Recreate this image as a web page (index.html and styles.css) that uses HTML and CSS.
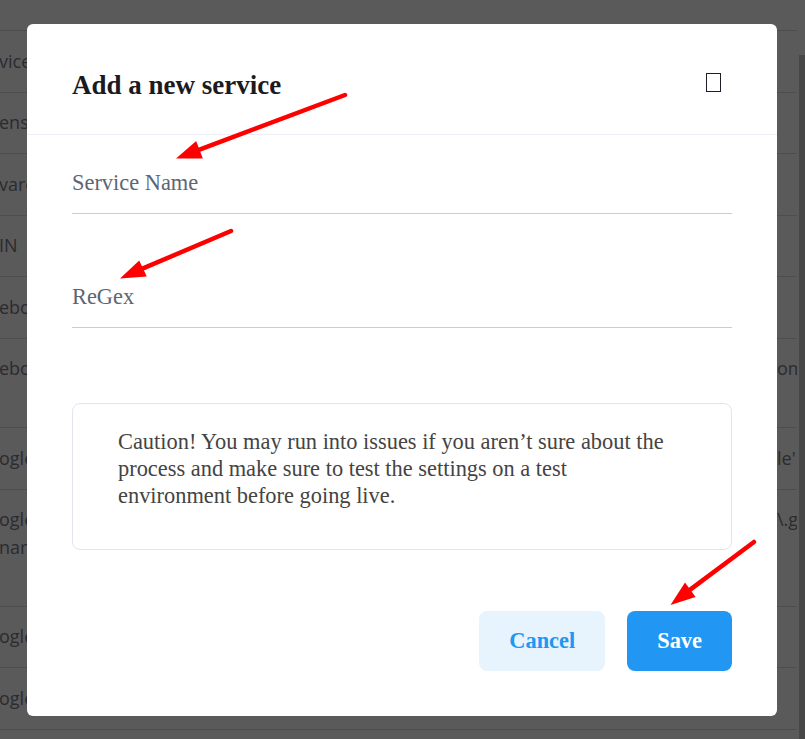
FILE: index.html
```html
<!DOCTYPE html>
<html lang="en">
<head>
<meta charset="utf-8">
<title>Add a new service</title>
<link rel="stylesheet" href="styles.css">
</head>
<body>
<div class="page">
  <div class="table">
    <div class="thead"></div>
    <div class="row"><div class="c1">vice</div><div class="c2"></div><div class="c3"></div></div>
    <div class="row"><div class="c1">enst</div><div class="c2"></div><div class="c3"></div></div>
    <div class="row"><div class="c1">vare</div><div class="c2"></div><div class="c3"></div></div>
    <div class="row"><div class="c1">IN</div><div class="c2"></div><div class="c3"></div></div>
    <div class="row"><div class="c1">ebo</div><div class="c2"></div><div class="c3"></div></div>
    <div class="row"><div class="c1">ebo</div><div class="c2">facebook<br>pixel</div><div class="c3">om</div></div>
    <div class="row"><div class="c1">ogle</div><div class="c2"></div><div class="c3">le'</div></div>
    <div class="row"><div class="c1">ogle<br>nar<br>&nbsp;</div><div class="c2"></div><div class="c3">\.g</div></div>
    <div class="row"><div class="c1">ogle</div><div class="c2"></div><div class="c3"></div></div>
    <div class="row"><div class="c1">ogle</div><div class="c2"></div><div class="c3"></div></div>
    <div class="row"><div class="c1"></div><div class="c2"></div><div class="c3"></div></div>
  </div>
  <div class="scrollbar"></div>
</div>

<div class="backdrop">
  <div class="modal">
    <div class="modal-header">
      <h2 class="modal-title">Add a new service</h2>
      <button class="close" aria-label="Close"></button>
    </div>
    <div class="modal-body">
      <div class="field">Service Name</div>
      <div class="field">ReGex</div>
      <div class="caution">Caution! You may run into issues if you aren’t sure about the process and make sure to test the settings on a test environment before going live.</div>
      <div class="actions">
        <button class="btn btn-light">Cancel</button>
        <button class="btn btn-primary">Save</button>
      </div>
    </div>
  </div>
</div>

<svg class="annotations" width="805" height="739" viewBox="0 0 805 739">
  <g stroke="#ff0000" stroke-width="4.5" stroke-linecap="round" fill="none">
    <line x1="345" y1="95" x2="199.5" y2="149.6"/>
    <line x1="231" y1="231" x2="143" y2="268.4"/>
    <line x1="754" y1="542" x2="690.2" y2="589.6"/>
  </g>
  <g fill="#ff0000">
    <polygon points="176,158.5 202.8,158.5 196.2,141"/>
    <polygon points="120,278.5 146.8,276.5 139.2,260.5"/>
    <polygon points="670.5,605 695.6,597 685,582.5"/>
  </g>
</svg>
</body>
</html>
```

FILE: styles.css
```css
html, body {
  margin: 0;
  height: 739px;
  overflow: hidden;
}

body {
  background: #5a5a5a;
  font-family: "Open Sans", "DejaVu Sans", sans-serif;
  color: #2b2b30;
}

.page {
  display: flex;
  align-items: flex-start;
}

.table {
  width: 797px;
}

.thead {
  height: 30px;
  border-bottom: 1px solid #4e4e4e;
}

.row {
  display: flex;
  border-bottom: 1px solid #4e4e4e;
  font-size: 18px;
  line-height: 27.6px;
}

.c1 {
  width: 120px;
  padding: 16.5px 0;
  white-space: nowrap;
  overflow: hidden;
  margin-left: -1px;
}

.c2 {
  flex: 1;
  padding: 16.5px 0;
  color: transparent;
}

.c3 {
  width: 20px;
  padding: 16.5px 0;
  white-space: nowrap;
  overflow: hidden;
}

.scrollbar {
  width: 6px;
  height: 684px;
  margin-left: 2px;
  margin-top: 55px;
  background: #474747;
}

.backdrop {
  position: fixed;
  inset: 0;
  display: flex;
  align-items: center;
  justify-content: center;
}

.modal {
  width: 750px;
  margin-right: 1px;
  background: #ffffff;
  border-radius: 6px;
  font-family: "Liberation Serif", "Times New Roman", serif;
}

.modal-header {
  display: flex;
  justify-content: space-between;
  align-items: flex-start;
  padding: 45px 56px 33px 45px;
  border-bottom: 1px solid #eceef5;
}

.modal-title {
  margin: 0;
  font-size: 27px;
  line-height: 32px;
  font-weight: 700;
  color: #1b1b1f;
}

.close {
  width: 15px;
  height: 19px;
  margin-top: 4px;
  padding: 0;
  background: transparent;
  border: 1.5px solid #1e1e2a;
  box-sizing: border-box;
}

.modal-body {
  padding: 34px 45px 45px;
}

.field {
  font-size: 22.4px;
  line-height: 27px;
  color: #5d6575;
  padding-bottom: 17px;
  border-bottom: 1px solid #cdcdcd;
}

.field + .field {
  margin-top: 69px;
}

.caution {
  margin-top: 75px;
  border: 1px solid #e3e4ee;
  border-radius: 8px;
  padding: 24px 58px 40px 45px;
  font-size: 22.4px;
  line-height: 27px;
  color: #444444;
}

.actions {
  display: flex;
  justify-content: flex-end;
  gap: 22px;
  margin-top: 61px;
}

.btn {
  height: 60px;
  padding: 0 30px;
  border: 0;
  border-radius: 8px;
  font-family: inherit;
  font-size: 22.4px;
  font-weight: 700;
}

.btn-light {
  background: #e8f4fd;
  color: #2196f3;
}

.btn-primary {
  background: #2196f3;
  color: #ffffff;
}

.annotations {
  position: fixed;
  left: 0;
  top: 0;
  pointer-events: none;
}
```
